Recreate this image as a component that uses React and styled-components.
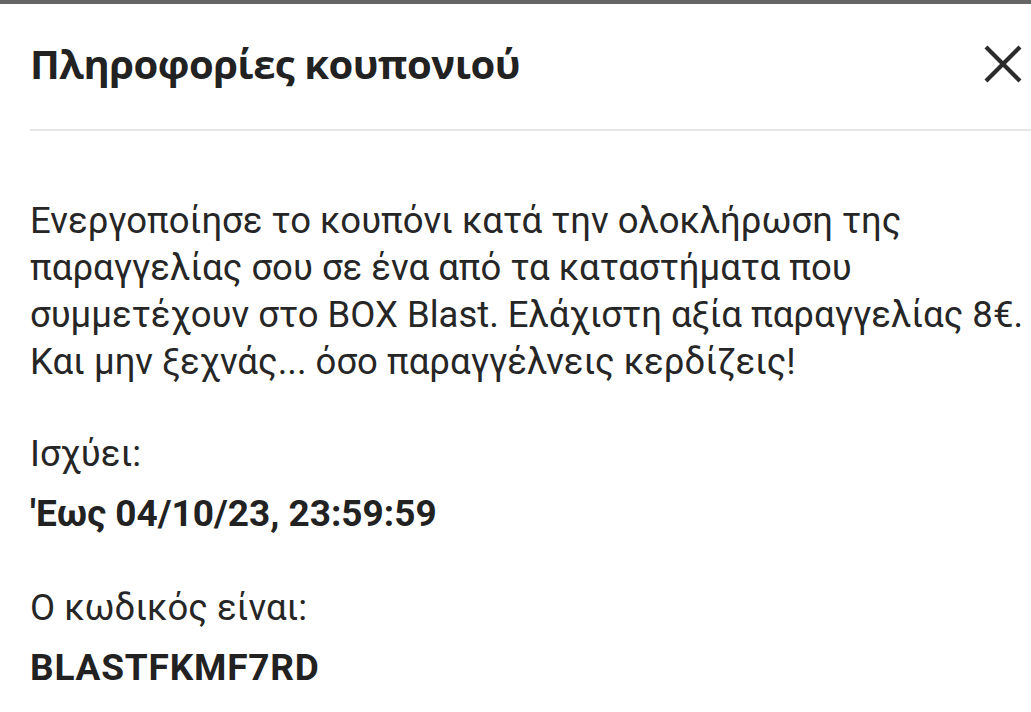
import React from "react";
import styled, { createGlobalStyle } from "styled-components";

const GlobalStyle = createGlobalStyle`
  html, body {
    margin: 0;
    padding: 0;
    background: #ffffff;
  }
  body {
    font-family: Roboto, "Noto Sans", sans-serif;
    color: #262626;
  }
`;

const Sheet = styled.div`
  display: flex;
  flex-direction: column;
  width: 1031px;
  height: 712px;
  overflow: hidden;
  background: #ffffff;
`;

const TopEdge = styled.div`
  height: 4px;
  background: #666666;
`;

const Body = styled.div`
  display: flex;
  flex-direction: column;
  padding-left: 30px;
`;

const Header = styled.div`
  display: flex;
  align-items: center;
  justify-content: space-between;
  height: 127px;
  border-bottom: 2px solid #e6e6e6;
  box-sizing: border-box;
  padding-bottom: 6px;
`;

const Title = styled.h1`
  margin: 0;
  font-family: "Open Sans", "Noto Sans", sans-serif;
  font-weight: 700;
  font-size: 40px;
  color: #222222;
  letter-spacing: -0.5px;
`;

const CloseButton = styled.button`
  display: flex;
  align-items: center;
  justify-content: center;
  width: 38px;
  height: 38px;
  margin-right: 9px;
  padding: 0;
  border: none;
  background: transparent;
  cursor: pointer;
`;

const Content = styled.div`
  display: flex;
  flex-direction: column;
  padding-top: 66px;
  white-space: nowrap;
`;

const Paragraph = styled.p`
  margin: 0;
  font-size: 36.5px;
  line-height: 47px;
  color: #262626;
`;

const InfoBlock = styled.div`
  display: flex;
  flex-direction: column;
  margin-top: ${(p) => p.$gap}px;
`;

const Label = styled.div`
  font-size: 36.5px;
  line-height: 60px;
  color: #262626;
`;

const Value = styled.div`
  font-size: 37px;
  line-height: 60px;
  font-weight: 700;
  letter-spacing: ${(p) => p.$spacing || 0}px;
  color: #222222;
`;

function CloseIcon() {
  return (
    <svg width="38" height="38" viewBox="0 0 38 38">
      <path
        d="M2 2 L36 36 M36 2 L2 36"
        stroke="#2b2b2b"
        strokeWidth="4.2"
        fill="none"
      />
    </svg>
  );
}

export default function App() {
  return (
    <>
      <GlobalStyle />
      <Sheet>
        <TopEdge />
        <Body>
          <Header>
            <Title>Πληροφορίες κουπονιού</Title>
            <CloseButton aria-label="close">
              <CloseIcon />
            </CloseButton>
          </Header>
          <Content>
            <Paragraph>
              Ενεργοποίησε το κουπόνι κατά την ολοκλήρωση της
              <br />
              παραγγελίας σου σε ένα από τα καταστήματα που
              <br />
              συμμετέχουν στο BOX Blast. Ελάχιστη αξία παραγγελίας 8€.
              <br />
              Και μην ξεχνάς... όσο παραγγέλνεις κερδίζεις!
            </Paragraph>
            <InfoBlock $gap={39}>
              <Label>Ισχύει:</Label>
              <Value>'Εως 04/10/23, 23:59:59</Value>
            </InfoBlock>
            <InfoBlock $gap={34}>
              <Label>Ο κωδικός είναι:</Label>
              <Value $spacing={0.8}>BLASTFKMF7RD</Value>
            </InfoBlock>
          </Content>
        </Body>
      </Sheet>
    </>
  );
}
